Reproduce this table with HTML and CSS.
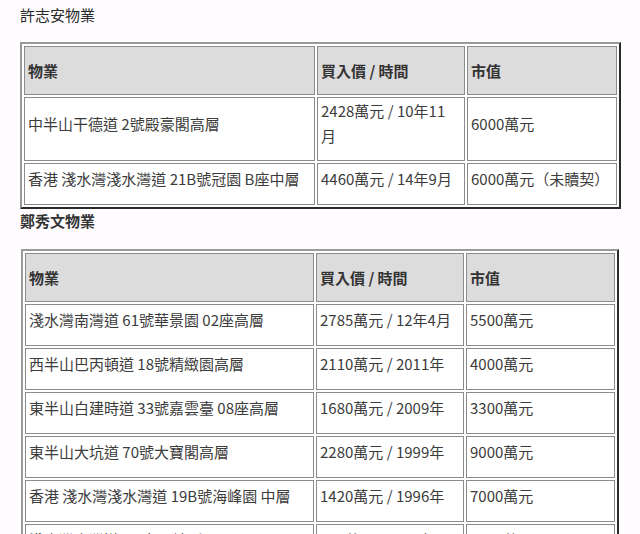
FILE: index.html
```html
<!DOCTYPE html>
<html lang="zh-Hant">
<head>
<meta charset="utf-8">
<link rel="stylesheet" href="styles.css">
</head>
<body>
<div class="page">
  <h2 class="title title-first">許志安物業</h2>
  <table class="prop t1">
    <tr class="head">
      <th>物業</th>
      <th>買入價 / 時間</th>
      <th>市值</th>
    </tr>
    <tr>
      <td>中半山干德道 2號殿豪閣高層</td>
      <td>2428萬元 / 10年11月</td>
      <td>6000萬元</td>
    </tr>
    <tr>
      <td>香港 淺水灣淺水灣道 21B號冠園 B座中層</td>
      <td>4460萬元 / 14年9月</td>
      <td>6000萬元（未贖契）</td>
    </tr>
  </table>
  <h2 class="title title-second">鄭秀文物業</h2>
  <table class="prop t2">
    <tr class="head">
      <th>物業</th>
      <th>買入價 / 時間</th>
      <th>市值</th>
    </tr>
    <tr>
      <td>淺水灣南灣道 61號華景園 02座高層</td>
      <td>2785萬元 / 12年4月</td>
      <td>5500萬元</td>
    </tr>
    <tr>
      <td>西半山巴丙頓道 18號精緻園高層</td>
      <td>2110萬元 / 2011年</td>
      <td>4000萬元</td>
    </tr>
    <tr>
      <td>東半山白建時道 33號嘉雲臺 08座高層</td>
      <td>1680萬元 / 2009年</td>
      <td>3300萬元</td>
    </tr>
    <tr>
      <td>東半山大坑道 70號大寶閣高層</td>
      <td>2280萬元 / 1999年</td>
      <td>9000萬元</td>
    </tr>
    <tr>
      <td>香港 淺水灣淺水灣道 19B號海峰園 中層</td>
      <td>1420萬元 / 1996年</td>
      <td>7000萬元</td>
    </tr>
    <tr>
      <td>淺水灣南灣道 43號 一幢別墅</td>
      <td>880萬元 / 1990年</td>
      <td>8000萬元</td>
    </tr>
  </table>
</div>
</body>
</html>
```

FILE: styles.css
```css
html, body {
  margin: 0;
  padding: 0;
  background: #fefcfe;
}

body {
  font-family: "Noto Sans CJK TC", "Noto Sans", sans-serif;
  color: #3c3c3c;
  font-size: 15px;
}

.page {
  padding-left: 20px;
}

.title {
  margin: 0;
  font-size: 15px;
  font-weight: normal;
  color: #2a2a2a;
}

.title-first {
  line-height: 30px;
  margin-bottom: 12px;
}

.title-second {
  line-height: 24px;
  margin-bottom: 16px;
  font-weight: bold;
  color: #333;
}

.prop {
  border-collapse: separate;
  border-spacing: 2px;
  border-width: 2px;
  border-style: solid;
  border-color: #9a9a9a #2a2a2a #2a2a2a #9a9a9a;
  table-layout: fixed;
  background: #fff;
}

.prop th,
.prop td {
  box-sizing: border-box;
  border: 1px solid #8c8c8c;
  text-align: left;
  vertical-align: middle;
  padding: 0 3px;
}

.prop th {
  height: 49px;
  background: #dddcdd;
  font-weight: bold;
  color: #333;
}

.prop td {
  height: 42px;
  line-height: 25px;
  padding-bottom: 12px;
  background: #fff;
}

.prop td:nth-child(2) {
  padding-right: 8px;
}

.t1 th:nth-child(1) { width: 291px; }
.t1 th:nth-child(2) { width: 148px; }
.t1 th:nth-child(3) { width: 150px; }

.t2 {
  margin-left: 1px;
}
.t2 th:nth-child(1) { width: 289px; }
.t2 th:nth-child(2) { width: 148px; }
.t2 th:nth-child(3) { width: 149px; }
```
